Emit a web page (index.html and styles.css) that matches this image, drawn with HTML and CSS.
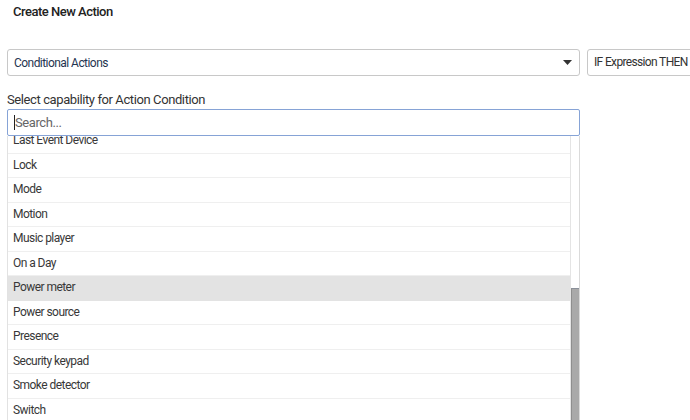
FILE: index.html
```html
<!DOCTYPE html>
<html lang="en">
<head>
    <meta charset="UTF-8">
    <meta name="viewport" content="width=device-width, initial-scale=1.0">
    <title>Create New Action</title>
    <link rel="stylesheet" href="styles.css">
</head>
<body>
    <div class="panel">
        <h2 class="title">Create New Action</h2>

        <!-- Tipo de ação + expressão -->
        <div class="action-row">
            <div class="select-box">
                <span class="select-value">Conditional Actions</span>
                <svg class="select-arrow" width="9" height="5" viewBox="0 0 9 5">
                    <path d="M0 0 L9 0 L4.5 5 Z" fill="#333"/>
                </svg>
            </div>
            <div class="expr-box">IF Expression THEN</div>
        </div>

        <label class="cap-label">Select capability for Action Condition</label>

        <!-- Busca + lista de capabilities -->
        <div class="picker">
            <div class="search-box">
                <span class="caret"></span><span class="placeholder">Search...</span>
            </div>
            <div class="list-wrap">
                <ul class="options">
                    <li>Last Event Device</li>
                    <li>Lock</li>
                    <li>Mode</li>
                    <li>Motion</li>
                    <li>Music player</li>
                    <li>On a Day</li>
                    <li class="hover">Power meter</li>
                    <li>Power source</li>
                    <li>Presence</li>
                    <li>Security keypad</li>
                    <li>Smoke detector</li>
                    <li>Switch</li>
                    <li>Temperature</li>
                </ul>
                <div class="scrollbar">
                    <div class="thumb"></div>
                </div>
            </div>
        </div>
    </div>
</body>
</html>
```

FILE: styles.css
```css
/* Reset básico */
* {
    margin: 0;
    padding: 0;
    box-sizing: border-box;
}

body {
    font-family: Roboto, 'Liberation Sans', sans-serif;
    background: #fff;
    color: #333;
    width: 690px;
    height: 420px;
    overflow: hidden;
}

.panel {
    padding: 4px 0 0 7px;
    width: 760px;
}

.title {
    font-size: 13px;
    font-weight: 500;
    line-height: 16px;
    letter-spacing: -0.5px;
    color: #222;
    margin-left: 6px;
}

.action-row {
    display: flex;
    gap: 7px;
    margin-top: 29px;
}

.select-box {
    width: 573px;
    height: 27px;
    border: 1px solid #c8c8c8;
    border-radius: 3px;
    display: flex;
    align-items: center;
    justify-content: space-between;
    padding: 0 7px 0 6px;
}

.select-value {
    font-size: 12px;
    letter-spacing: -0.55px;
    color: #1f3550;
}

.select-arrow {
    display: block;
}

.expr-box {
    width: 140px;
    height: 27px;
    border: 1px solid #c8c8c8;
    border-radius: 3px;
    font-size: 12px;
    letter-spacing: -0.65px;
    line-height: 25px;
    padding-left: 6px;
    color: #333;
}

.cap-label {
    display: block;
    font-size: 13px;
    letter-spacing: -0.4px;
    line-height: 16px;
    margin: 16px 0 1px;
    color: #333;
}

.picker {
    width: 573px;
}

.search-box {
    height: 27px;
    border: 1px solid #86a3d6;
    border-radius: 2px;
    display: flex;
    align-items: center;
    padding-left: 6px;
    font-size: 13px;
    letter-spacing: -0.4px;
}

.caret {
    width: 1px;
    height: 15px;
    background: #222;
}

.placeholder {
    color: #666;
}

.list-wrap {
    display: flex;
    height: 286px;
    overflow: hidden;
    border-left: 1px solid #e2e2e2;
}

.options {
    list-style: none;
    flex: 1;
    margin-top: -7px;
}

.options li {
    height: 24.5px;
    line-height: 23.5px;
    border-bottom: 1px solid #efefef;
    padding-left: 5px;
    font-size: 12px;
    letter-spacing: -0.55px;
    color: #383838;
}

.options li.hover {
    background: #e3e3e3;
    border-bottom-color: #e3e3e3;
}

.scrollbar {
    width: 10px;
    padding-top: 152px;
    background: #fff;
    border-left: 1px solid #e4e4e4;
    border-right: 1px solid #dadada;
}

.thumb {
    height: 200px;
    background: #a9a9a9;
    border-top: 1px solid #8a909a;
    border-left: 1px solid #8e8e8e;
}
```
